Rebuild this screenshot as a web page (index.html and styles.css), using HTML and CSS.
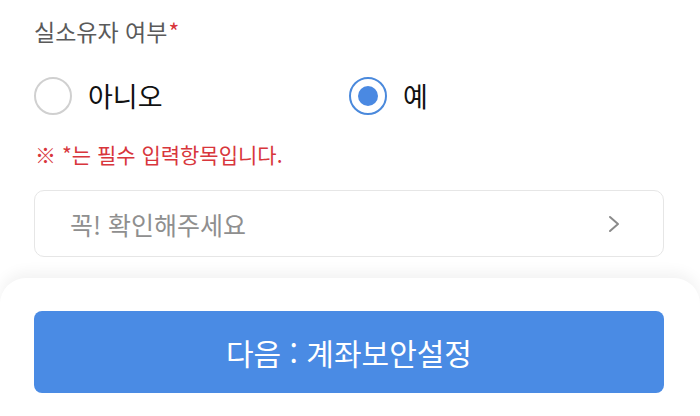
FILE: index.html
```html
<!DOCTYPE html>
<html lang="ko">
<head>
<meta charset="utf-8">
<link rel="stylesheet" href="styles.css">
</head>
<body>
<main class="page">
  <section class="form">
    <div class="label">실소유자 여부<span class="req">*</span></div>
    <div class="radios">
      <label class="radio">
        <span class="circle"></span>
        <span class="radio-text">아니오</span>
      </label>
      <label class="radio">
        <span class="circle checked"><span class="dot"></span></span>
        <span class="radio-text">예</span>
      </label>
    </div>
    <p class="notice">※ *는 필수 입력항목입니다.</p>
    <div class="field">
      <span class="placeholder">꼭! 확인해주세요</span>
      <svg class="chev" width="14" height="20" viewBox="0 0 14 20"><path d="M3 3 L11 10 L3 17" fill="none" stroke="#8a8a8a" stroke-width="2" stroke-linecap="round" stroke-linejoin="round"/></svg>
    </div>
  </section>
  <footer class="bottom">
    <button class="next">다음 : 계좌보안설정</button>
  </footer>
</main>
</body>
</html>
```

FILE: styles.css
```css
html, body {
  margin: 0;
  padding: 0;
  background: #ffffff;
}
body {
  width: 700px;
  height: 416px;
  overflow: hidden;
  font-family: "Noto Sans CJK KR", "Noto Sans", sans-serif;
}
.page {
  display: flex;
  flex-direction: column;
  height: 416px;
}
.form {
  padding: 0 36px 0 34px;
}
.label {
  margin-top: 15px;
  height: 32px;
  line-height: 32px;
  font-size: 23px;
  color: #5a5a5a;
}
.req {
  color: #d8363c;
  margin-left: 1px;
}
.radios {
  display: grid;
  grid-template-columns: 315px 315px;
  height: 40px;
  margin-top: 29px;
}
.radio {
  display: flex;
  align-items: center;
  gap: 16px;
}
.circle {
  box-sizing: border-box;
  width: 38px;
  height: 38px;
  border: 2px solid #d0d0d0;
  border-radius: 50%;
  display: flex;
  align-items: center;
  justify-content: center;
}
.circle.checked {
  border-color: #4a89dc;
}
.dot {
  width: 20px;
  height: 20px;
  border-radius: 50%;
  background: #4a89e2;
}
.radio-text {
  font-size: 27px;
  color: #111;
  line-height: 40px;
}
.notice {
  margin: 24px 0 0 1px;
  height: 28px;
  line-height: 28px;
  font-size: 21px;
  color: #d8363c;
}
.field {
  box-sizing: border-box;
  margin-top: 22px;
  height: 67px;
  border: 1px solid #e6e6e6;
  border-radius: 10px;
  display: flex;
  align-items: center;
  justify-content: space-between;
  padding: 0 42px 0 35px;
}
.placeholder {
  font-size: 25px;
  color: #8f8f8f;
}
.chev {
  display: block;
}
.bottom {
  margin-top: 21px;
  flex: 1;
  background: #ffffff;
  border-radius: 26px 26px 0 0;
  box-shadow: 0 -6px 14px rgba(0, 0, 0, 0.05);
  padding: 33px 36px 0 34px;
}
.next {
  width: 100%;
  height: 82px;
  border: none;
  border-radius: 8px;
  background: #4a8be4;
  color: #ffffff;
  font-family: "Noto Sans CJK KR", "Noto Sans", sans-serif;
  font-size: 30px;
  padding: 0;
}
```
